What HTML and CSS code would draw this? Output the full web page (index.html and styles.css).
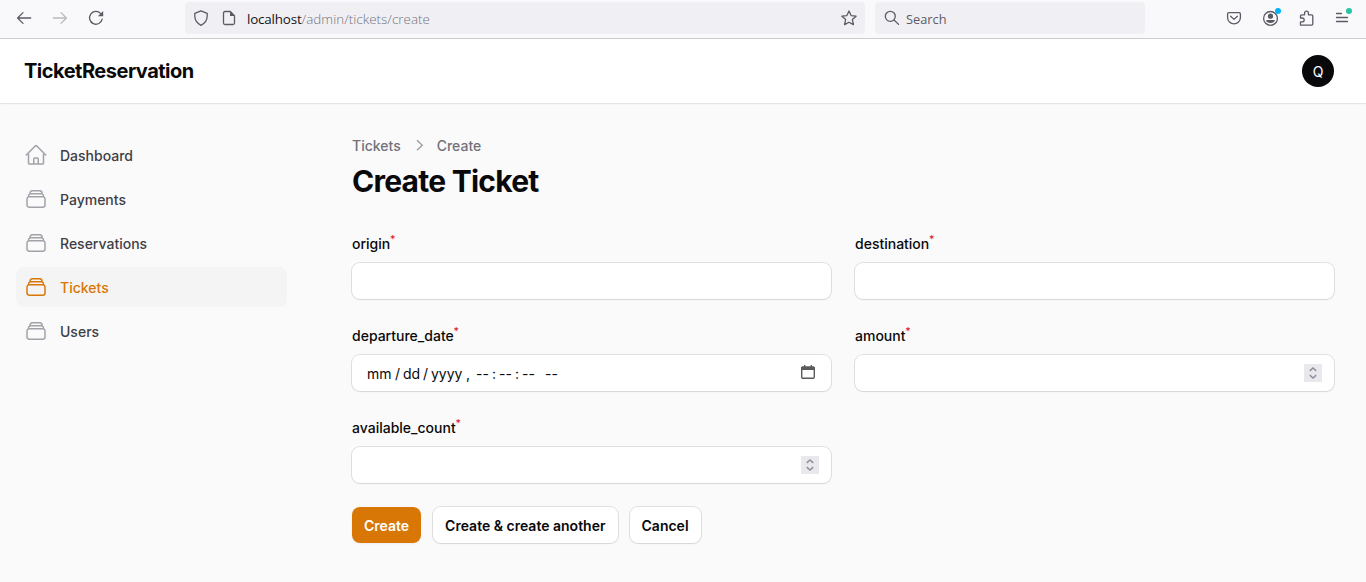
FILE: index.html
```html
<!DOCTYPE html>
<html lang="en">
<head>
<meta charset="utf-8">
<title>Create Ticket - TicketReservation</title>
<link rel="stylesheet" href="styles.css">
</head>
<body>
<svg class="sprite" aria-hidden="true">
  <symbol id="stack" viewBox="0 0 24 24"><path d="M6 6.878V6a2.25 2.25 0 012.25-2.25h7.5A2.25 2.25 0 0118 6v.878m-12 0c.235-.083.487-.128.75-.128h10.5c.263 0 .515.045.75.128m-12 0A2.25 2.25 0 004.5 9v.878m13.5-3A2.25 2.25 0 0119.5 9v.878m0 0a2.246 2.246 0 00-.75-.128H5.25c-.263 0-.515.045-.75.128m15 0A2.25 2.25 0 0121 12v6a2.25 2.25 0 01-2.25 2.25H5.25A2.25 2.25 0 013 18v-6c0-.98.626-1.813 1.5-2.122"/></symbol>
  <symbol id="spin" viewBox="0 0 18 18"><path d="M5.8 6.9L9 4l3.2 2.9M5.8 11.1L9 14l3.2-2.9"/></symbol>
</svg>
<div class="browser">
  <div class="history">
    <svg class="bicon" viewBox="0 0 16 16"><path d="M14.7 8H1.6M7 2.6L1.6 8 7 13.4"/></svg>
    <svg class="bicon faded" viewBox="0 0 16 16"><path d="M1.3 8h13.1M9 2.6L14.4 8 9 13.4"/></svg>
    <svg class="bicon" viewBox="0 0 16 16"><path d="M14.2 9.2A6.4 6.4 0 1 1 12.6 3.4"/><path class="solid" d="M15.2 1v5.300H9.900z"/></svg>
  </div>
  <div class="address">
    <svg class="bicon shield" viewBox="0 0 16 16"><path d="M8 .8l6.200 2.500v2.800c0 4-2.200 7.200-6.200 9.200-4-2-6.200-5.200-6.200-9.200V3.300z"/></svg>
    <svg class="bicon page" viewBox="0 0 16 16"><path d="M9.300 1.500H4A1.500 1.500 0 0 0 2.500 3v10A1.500 1.500 0 0 0 4 14.500h8a1.500 1.500 0 0 0 1.500-1.500V5.700z"/><path class="solid" d="M9 1.300v4.700h4.700z"/></svg>
    <span class="url"><b>localhost</b>/admin/tickets/create</span>
    <svg class="bicon star" viewBox="0 0 16 16"><path d="M8 1l2.100 4.600 5 .6-3.700 3.400 1 5L8 12.200l-4.400 2.400 1-5L.9 6.200l5-.6z"/></svg>
  </div>
  <div class="search">
    <svg class="bicon" viewBox="0 0 16 16"><circle cx="6.300" cy="6.300" r="5"/><path d="M10 10l4.600 4.400"/></svg>
    <span>Search</span>
  </div>
  <div class="tools">
    <svg class="bicon" viewBox="0 0 16 16"><path d="M3 2.600h10A1.400 1.400 0 0 1 14.400 4v3.500a6.400 6.400 0 0 1-12.800 0V4A1.400 1.400 0 0 1 3 2.600z"/><path d="M4.600 6.200L8 9.400l3.400-3.200"/></svg>
    <span class="tool"><svg class="bicon" viewBox="0 0 16 16"><circle cx="8.500" cy="8.400" r="6.900"/><circle class="solid" cx="8.500" cy="6.200" r="2.600"/><path class="solid" d="M4.200 9.900h8.600c0 1.700-2 3-4.300 3s-4.300-1.300-4.300-3z"/></svg><i class="dot blue"></i></span>
    <svg class="bicon" viewBox="0 0 16 16"><path d="M2.500 15.200h11.200a1.100 1.100 0 0 0 1.100-1.100V6a1.200 1.200 0 0 0-1.200-1.200h-3.200V3a1.900 1.900 0 0 0-3.800 0v1.800H3.700A1.200 1.200 0 0 0 2.500 6v2h1.700a1.900 1.900 0 0 1 0 3.900H2.500z"/></svg>
    <span class="tool"><svg class="bicon" viewBox="0 0 16 16"><path d="M2.500 3.500h5M2.500 7.500h11M2.500 11.500h11"/></svg><i class="dot green"></i></span>
  </div>
</div>

<header class="topbar">
  <div class="brand">TicketReservation</div>
  <div class="avatar">Q</div>
</header>

<div class="layout">
  <nav class="sidebar">
    <a class="nav-item"><svg viewBox="0 0 24 24"><path d="M2.250 12l8.954-8.955c.44-.439 1.152-.439 1.591 0L21.750 12M4.500 9.750v10.125c0 .621.504 1.125 1.125 1.125H9.750v-4.875c0-.621.504-1.125 1.125-1.125h2.250c.621 0 1.125.504 1.125 1.125V21h4.125c.621 0 1.125-.504 1.125-1.125V9.750M8.250 21h8.250"/></svg>Dashboard</a>
    <a class="nav-item"><svg><use href="#stack"/></svg>Payments</a>
    <a class="nav-item"><svg><use href="#stack"/></svg>Reservations</a>
    <a class="nav-item active"><svg><use href="#stack"/></svg>Tickets</a>
    <a class="nav-item"><svg><use href="#stack"/></svg>Users</a>
  </nav>
  <main class="content">
    <div class="crumbs"><span>Tickets</span><svg viewBox="0 0 20 20"><path d="M8 4.200l5.200 5-5.200 5"/></svg><span>Create</span></div>
    <h1>Create Ticket</h1>
    <div class="form">
      <div class="field"><div class="label">origin<sup>*</sup></div><div class="input"></div></div>
      <div class="field"><div class="label">destination<sup>*</sup></div><div class="input"></div></div>
      <div class="field"><div class="label">departure_date<sup>*</sup></div>
        <div class="input">
          <div class="date"><span class="mm">mm</span><span class="sl">/</span><span class="dd">dd</span><span class="sl">/</span><span class="yy">yyyy</span><span class="comma">,</span><span class="hh">--</span><span class="colon">:</span><span class="mi">--</span><span class="colon">:</span><span class="ss">--</span><span>--</span></div>
          <svg class="calendar" viewBox="0 0 14 14"><path class="frame" d="M1.700 2.100h10.600q1 0 1 1v9q0 1.200-1.200 1.200H1.900Q.7 13.300.7 12.100v-9q0-1 1-1z"/><path d="M1.500 1.400h11q1.500 0 1.500 1.500v2.100H0V2.900q0-1.500 1.500-1.500zM3 0h1.300v3H3zM9.700 0H11v3H9.700z"/></svg>
        </div>
      </div>
      <div class="field"><div class="label">amount<sup>*</sup></div><div class="input"><svg class="spinner"><use href="#spin"/></svg></div></div>
      <div class="field"><div class="label">available_count<sup>*</sup></div><div class="input"><svg class="spinner"><use href="#spin"/></svg></div></div>
    </div>
    <div class="actions">
      <button class="btn primary">Create</button>
      <button class="btn">Create &amp; create another</button>
      <button class="btn">Cancel</button>
    </div>
  </main>
</div>
</body>
</html>
```
FILE: styles.css
```css
* { box-sizing: border-box; }
body {
  margin: 0;
  height: 582px;
  overflow: hidden;
  background: #fafafa;
  color: #09090b;
  font: 14px/20px Inter, sans-serif;
}
.sprite { display: none; }

.browser {
  display: flex;
  height: 39px;
  padding-top: 2px;
  background: #f9f9fb;
  border-bottom: 1px solid #ccc;
  font: 13.4px/32px "Open Sans", sans-serif;
  color: #5b5b66;
}
.bicon {
  display: block;
  flex: none;
  width: 16px;
  height: 16px;
  fill: none;
  stroke: #5b5b66;
  stroke-width: 1.3;
  stroke-linecap: round;
  stroke-linejoin: round;
}
.bicon .solid { fill: #5b5b66; stroke: none; }
.faded { opacity: .4; }
.history { display: flex; align-items: center; gap: 20px; width: 185px; height: 32px; padding-left: 16px; }
.address {
  display: flex;
  align-items: center;
  width: 680px;
  height: 32px;
  padding: 0 8px;
  border-radius: 4px;
  background: #f0f0f4;
}
.page { margin: 0 10px 0 12px; }
.url { padding-top: 2px; color: #73737b; white-space: nowrap; font-weight: 300; letter-spacing: .03px; }
.url b { font-weight: 400; color: #15141a; letter-spacing: -.17px; }
.star { margin-left: auto; }
.search {
  display: flex;
  align-items: center;
  gap: 6px;
  width: 270px;
  height: 32px;
  margin-left: 10px;
  padding-left: 9px;
  border-radius: 4px;
  background: #f0f0f4;
}
.search span { padding-top: 2px; font-size: 12.8px; }
.tools { display: flex; align-items: center; gap: 20px; height: 32px; margin-left: auto; padding-right: 16px; }
.tool { position: relative; }
.dot { position: absolute; top: -2px; right: -2px; width: 6px; height: 6px; border-radius: 50%; }
.blue { background: #00b3f4; right: -3px; }
.green { background: #2ac3a2; }

.topbar {
  display: flex;
  align-items: center;
  justify-content: space-between;
  height: 64px;
  padding: 0 32px 0 24px;
  background: #fff;
  box-shadow: 0 0 0 1px rgba(9, 9, 11, .05), 0 1px 2px rgba(0, 0, 0, .05);
  clip-path: inset(0 0 -4px 0);
}
.brand { font-size: 20px; font-weight: 700; letter-spacing: -.5px; }
.avatar {
  width: 32px;
  height: 32px;
  border-radius: 50%;
  background: #09090b;
  color: #fff;
  font-size: 14px;
  line-height: 33px;
  text-align: center;
}

.layout { display: flex; }
.sidebar { display: flex; flex-direction: column; gap: 4px; width: 320px; padding: 32px 33px 0 16px; }
.nav-item {
  display: flex;
  align-items: center;
  gap: 12px;
  height: 40px;
  padding: 1px 8px 0;
  border-radius: 8px;
  color: #3f3f46;
  font-weight: 500;
}
.nav-item svg {
  width: 24px;
  height: 24px;
  margin-top: -1px;
  fill: none;
  stroke: #a1a1aa;
  stroke-width: 1.5;
  stroke-linecap: round;
  stroke-linejoin: round;
}
.nav-item.active { background: #f4f4f5; color: #d97706; }
.nav-item.active svg { stroke: #d97706; }

.content { flex: 1; padding: 32px 32px 0; }
.crumbs { display: flex; align-items: center; gap: 8px; height: 22px; color: #71717a; font-weight: 500; }
.crumbs svg { width: 20px; height: 20px; fill: none; stroke: #a1a1aa; stroke-width: 1.5; }
h1 { margin: 6px 0 32px; font-size: 30px; line-height: 36px; font-weight: 700; letter-spacing: -.75px; }
.form { display: grid; grid-template-columns: 1fr 1fr; gap: 24px; }
.field { display: grid; gap: 8px; }
.label { height: 24px; padding-top: 1px; line-height: 24px; font-weight: 500; }
sup { font-size: 10.5px; line-height: 0; color: #dc2626; vertical-align: baseline; position: relative; top: -6px; left: -.3px; }
.input {
  display: flex;
  align-items: center;
  height: 36px;
  padding: 0 12px;
  border-radius: 8px;
  background: #fff;
  box-shadow: 0 0 0 1px rgba(9, 9, 11, .1), 0 1px 2px rgba(0, 0, 0, .05);
}
.date { display: flex; padding: 2px 0 0 3px; white-space: pre; }
.mm { width: 28px; }
.sl { width: 8px; }
.dd { width: 20px; }
.yy { width: 35px; }
.comma { width: 10px; }
.hh { width: 16px; }
.colon { width: 7px; }
.mi { width: 16px; }
.ss { width: 23px; }
.calendar { width: 14px; height: 14px; margin: -3px 4px 0 auto; fill: #5b5b5b; }
.calendar .frame { fill: none; stroke: #5b5b5b; stroke-width: 1.400; }
.spinner { width: 18px; height: 18px; margin-left: auto; background: #e9e9ed; fill: none; stroke: #8f8f9d; stroke-width: 1.500; }

.actions { display: flex; gap: 12px; margin-top: 24px; }
.btn {
  height: 36px;
  padding: 2px 12px 0;
  border: 0;
  border-radius: 8px;
  background: #fff;
  box-shadow: 0 0 0 1px rgba(9, 9, 11, .1), 0 1px 2px rgba(0, 0, 0, .05);
  color: #09090b;
  font: 600 14px/20px Inter, sans-serif;
}
.primary { background: #d97706; color: #fff; box-shadow: 0 1px 2px rgba(0, 0, 0, .05); }
```
